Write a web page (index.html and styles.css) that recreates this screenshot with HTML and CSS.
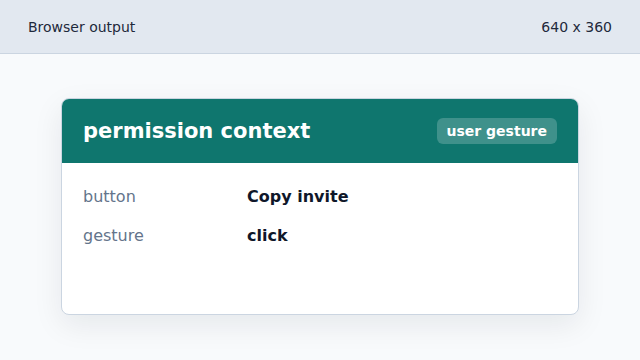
FILE: index.html
```html
<!DOCTYPE html>
<html>
<head>
<meta charset="utf-8">
<link rel="stylesheet" href="styles.css">
</head>
<body>
<div class="topbar">
  <span>Browser output</span>
  <span>640 x 360</span>
</div>
<main class="stage">
  <section class="card">
    <header class="card-head">
      <h1 class="title">permission context</h1>
      <span class="badge">user gesture</span>
    </header>
    <div class="card-body">
      <div class="label">button</div>
      <div class="value">Copy invite</div>
      <div class="label">gesture</div>
      <div class="value">click</div>
    </div>
  </section>
</main>
</body>
</html>
```

FILE: styles.css
```css
* { box-sizing: border-box; }
html, body { margin: 0; padding: 0; }
body {
  width: 640px;
  height: 360px;
  overflow: hidden;
  background: #f8fafc;
  font-family: "DejaVu Sans", sans-serif;
  color: #0f172a;
}
.topbar {
  height: 54px;
  background: #e2e8f0;
  border-bottom: 1px solid #cbd5e1;
  display: flex;
  align-items: center;
  justify-content: space-between;
  padding: 0 28px;
  font-size: 14px;
  color: #1e293b;
}
.stage {
  display: flex;
  justify-content: center;
  padding-top: 44px;
}
.card {
  width: 518px;
  height: 217px;
  background: #ffffff;
  border: 1px solid #cbd5e1;
  border-radius: 8px;
  overflow: hidden;
  box-shadow: 0 10px 30px rgba(15, 23, 42, 0.08);
}
.card-head {
  height: 64px;
  background: #0f766e;
  display: flex;
  align-items: center;
  justify-content: space-between;
  padding: 0 21px;
}
.title {
  margin: 0;
  font-size: 21px;
  font-weight: bold;
  color: #ffffff;
}
.badge {
  background: rgba(255, 255, 255, 0.2);
  color: #ffffff;
  font-size: 14px;
  font-weight: bold;
  padding: 5px 10px;
  border-radius: 6px;
}
.card-body {
  display: grid;
  grid-template-columns: 164px 1fr;
  row-gap: 17px;
  padding: 23px 21px;
  font-size: 16px;
  line-height: 22px;
}
.label { color: #64748b; }
.value { font-weight: bold; color: #0f172a; }
```
